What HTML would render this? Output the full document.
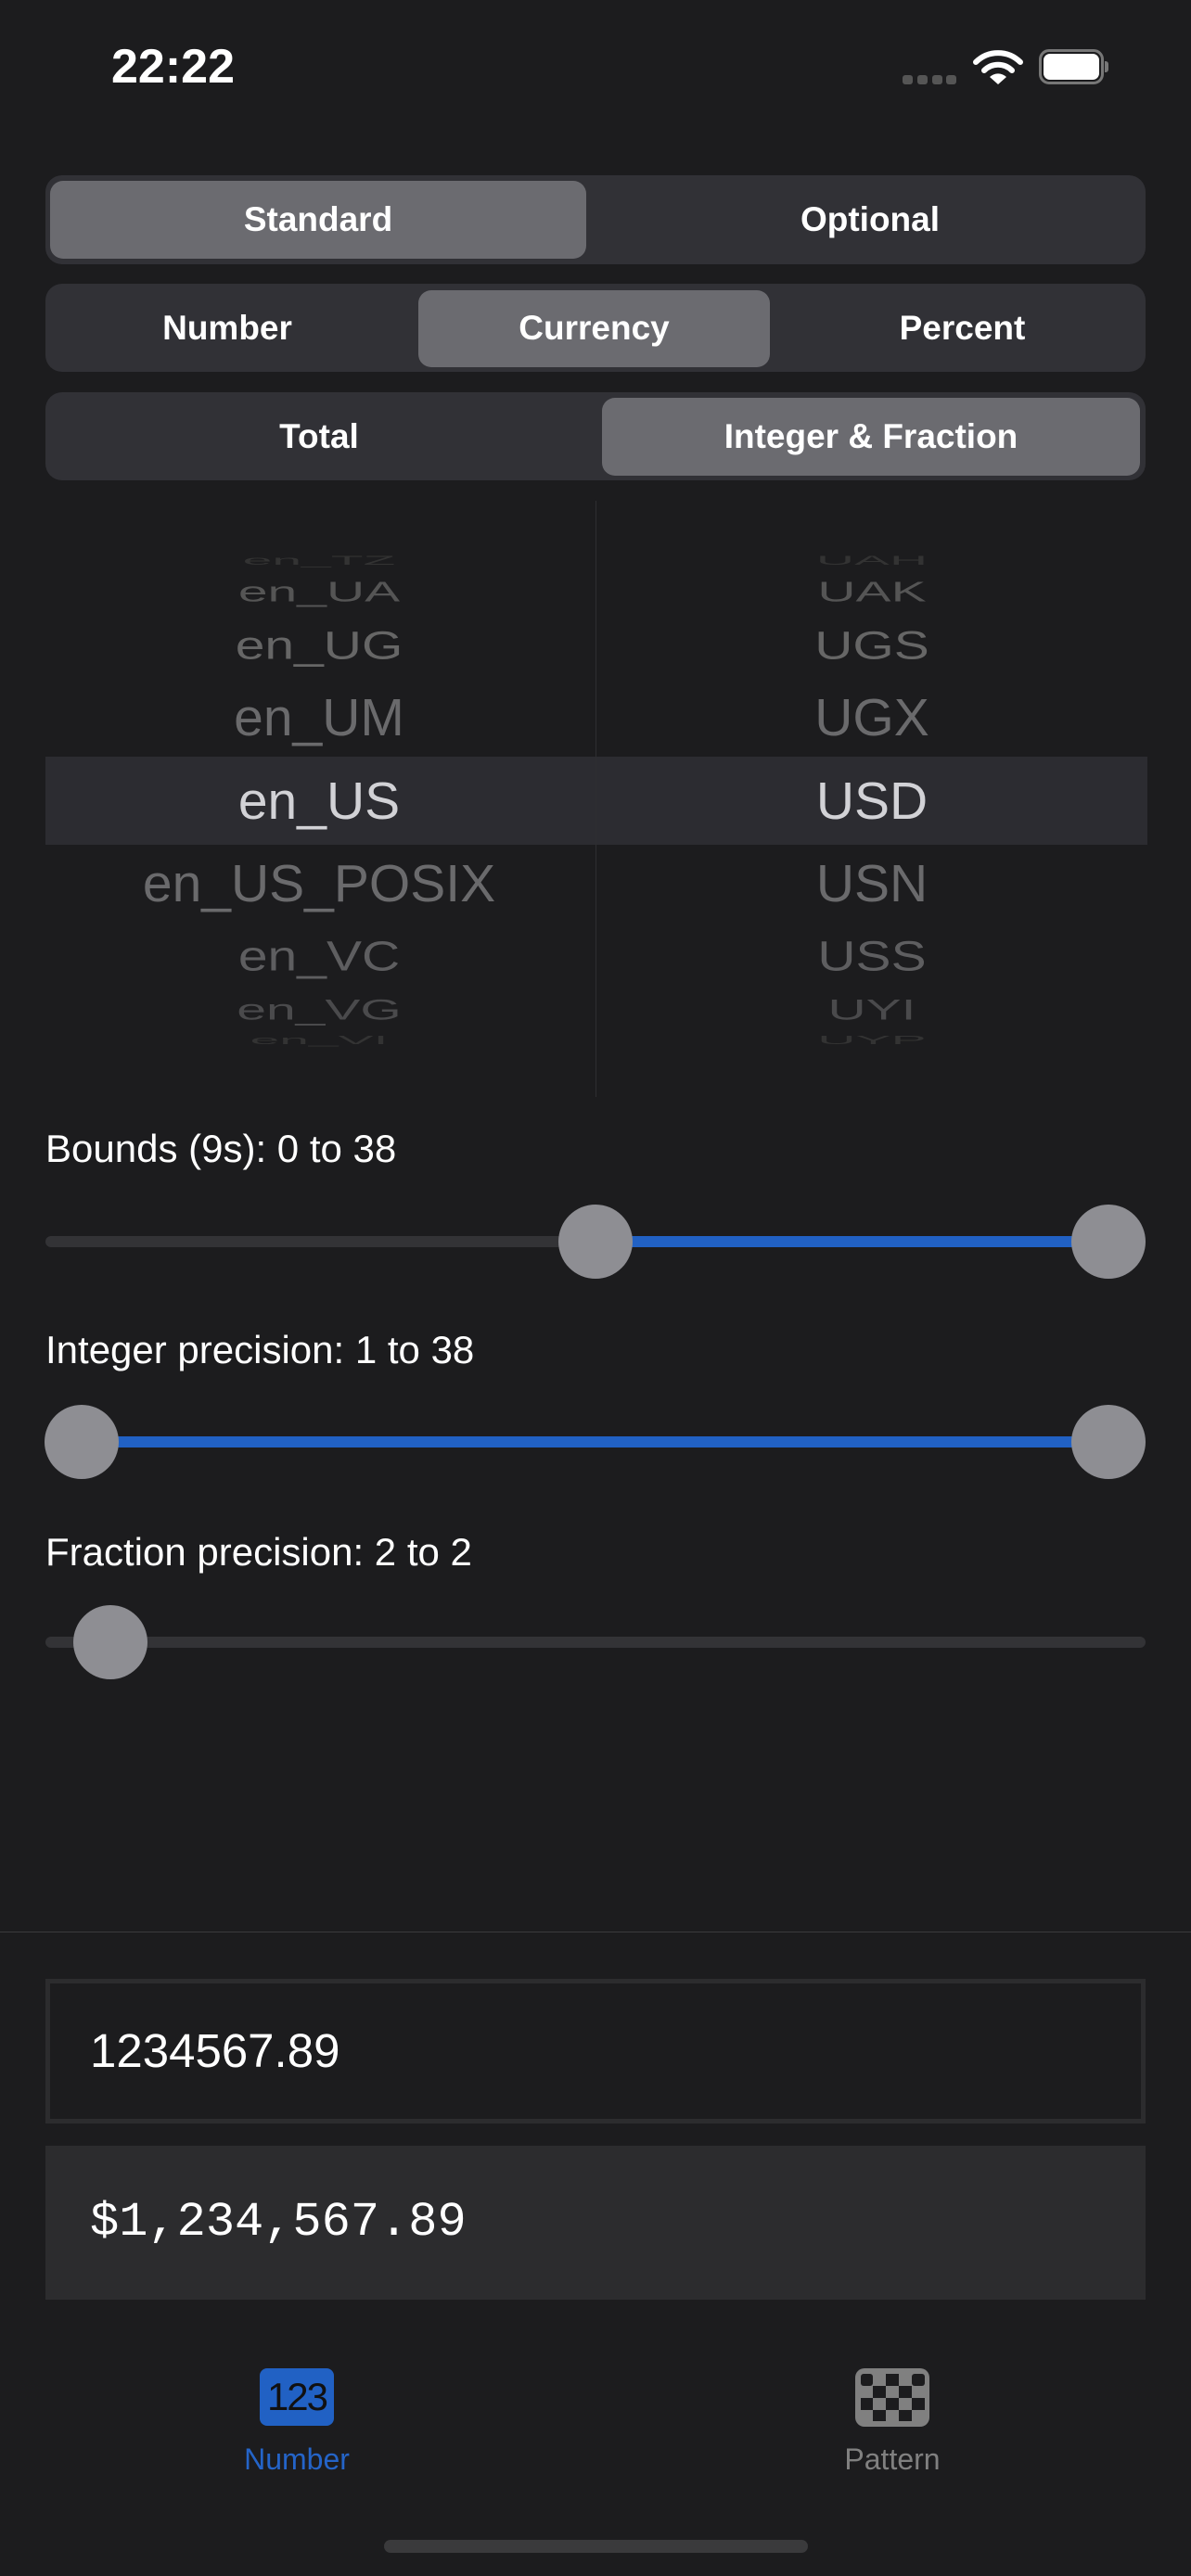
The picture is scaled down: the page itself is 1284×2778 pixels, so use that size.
<!DOCTYPE html>
<html><head><meta charset="utf-8"><style>
*{margin:0;padding:0;box-sizing:border-box}
body{width:1284px;height:2778px;background:#1c1c1e;position:relative;overflow:hidden;font-family:"Liberation Sans",sans-serif;color:#fff}
.a{position:absolute}
.seg{position:absolute;left:49px;width:1186px;background:#313136;border-radius:18px}
.sel{position:absolute;background:#6b6b70;border-radius:14px}
.st{position:absolute;font-size:37px;font-weight:bold;text-align:center;transform:translateY(-50%)}
.pk{position:absolute;width:600px;text-align:center;font-size:57px;line-height:1;white-space:nowrap}
.lbl{position:absolute;left:49px;font-size:42px;color:#fff}
.trk{position:absolute;left:49px;width:1186px;height:12px;background:#333336;border-radius:6px}
.blue{position:absolute;height:12px;background:#2161c4}
.th{position:absolute;width:80px;height:80px;border-radius:50%;background:#8e8e93}
</style></head><body>
<div class="a" style="left:120px;top:43px;font-size:52px;font-weight:bold;line-height:58px">22:22</div>
<div class="a" style="left:973px;top:81px;width:11px;height:10px;border-radius:3px;background:#555"></div>
<div class="a" style="left:989px;top:81px;width:11px;height:10px;border-radius:3px;background:#555"></div>
<div class="a" style="left:1005px;top:81px;width:11px;height:10px;border-radius:3px;background:#555"></div>
<div class="a" style="left:1020px;top:81px;width:11px;height:10px;border-radius:3px;background:#555"></div>
<svg class="a" style="left:1048px;top:54px" width="56" height="38" viewBox="0 0 56 38"><path d="M4 13 A34 34 0 0 1 52 13" stroke="#fff" stroke-width="6" fill="none" stroke-linecap="round"/><path d="M13 22 A21 21 0 0 1 43 22" stroke="#fff" stroke-width="6" fill="none" stroke-linecap="round"/><path d="M28 37 L19 29 A13 13 0 0 1 37 29 Z" fill="#fff"/></svg>
<div class="a" style="left:1120px;top:53px;width:70px;height:38px;border:3px solid #777;border-radius:11px"></div>
<div class="a" style="left:1125px;top:58px;width:60px;height:28px;background:#fff;border-radius:7px"></div>
<div class="a" style="left:1191px;top:66px;width:4px;height:12px;background:#777;border-radius:0 3px 3px 0"></div>

<div class="seg" style="top:189px;height:96px"></div>
<div class="sel" style="left:54px;top:195px;width:578px;height:84px"></div>
<div class="st" style="left:54px;width:578px;top:237px">Standard</div>
<div class="st" style="left:642px;width:592px;top:237px">Optional</div>

<div class="seg" style="top:306px;height:95px"></div>
<div class="sel" style="left:451px;top:313px;width:379px;height:83px"></div>
<div class="st" style="left:49px;width:392px;top:354px">Number</div>
<div class="st" style="left:451px;width:379px;top:354px">Currency</div>
<div class="st" style="left:840px;width:395px;top:354px">Percent</div>

<div class="seg" style="top:423px;height:95px"></div>
<div class="sel" style="left:649px;top:429px;width:580px;height:84px"></div>
<div class="st" style="left:49px;width:590px;top:471px">Total</div>
<div class="st" style="left:649px;width:580px;top:471px">Integer &amp; Fraction</div>

<div class="a" style="left:49px;top:816px;width:1188px;height:95px;background:#2c2c31"></div>
<div class="a" style="left:642px;top:540px;width:1px;height:643px;background:#2e2e31"></div>

<div class="pk" style="left:44px;top:576px;color:#333;transform:scaleY(.24)">en_TZ</div>
<div class="pk" style="left:44px;top:610px;color:#555;transform:scaleY(.53)">en_UA</div>
<div class="pk" style="left:44px;top:668px;color:#666;transform:scaleY(.75)">en_UG</div>
<div class="pk" style="left:44px;top:746px;color:#6a6a6c">en_UM</div>
<div class="pk" style="left:44px;top:836px;color:#d2d2d6">en_US</div>
<div class="pk" style="left:44px;top:925px;color:#6a6a6c">en_US_POSIX</div>
<div class="pk" style="left:44px;top:1003px;color:#5e5e60;transform:scaleY(.8)">en_VC</div>
<div class="pk" style="left:44px;top:1061px;color:#4a4a4c;transform:scaleY(.55)">en_VG</div>
<div class="pk" style="left:44px;top:1093px;color:#333;transform:scaleY(.23)">en_VI</div>

<div class="pk" style="left:640px;top:576px;color:#333;transform:scaleY(.24)">UAH</div>
<div class="pk" style="left:640px;top:610px;color:#555;transform:scaleY(.53)">UAK</div>
<div class="pk" style="left:640px;top:668px;color:#666;transform:scaleY(.75)">UGS</div>
<div class="pk" style="left:640px;top:746px;color:#6a6a6c">UGX</div>
<div class="pk" style="left:640px;top:836px;color:#d2d2d6">USD</div>
<div class="pk" style="left:640px;top:925px;color:#6a6a6c">USN</div>
<div class="pk" style="left:640px;top:1003px;color:#5e5e60;transform:scaleY(.8)">USS</div>
<div class="pk" style="left:640px;top:1061px;color:#4a4a4c;transform:scaleY(.55)">UYI</div>
<div class="pk" style="left:640px;top:1093px;color:#333;transform:scaleY(.23)">UYP</div>

<div class="lbl" style="top:1215px">Bounds (9s): 0 to 38</div>
<div class="trk" style="top:1333px"></div>
<div class="blue" style="left:642px;width:555px;top:1333px"></div>
<div class="th" style="left:602px;top:1299px"></div>
<div class="th" style="left:1155px;top:1299px"></div>

<div class="lbl" style="top:1432px">Integer precision: 1 to 38</div>
<div class="trk" style="top:1549px"></div>
<div class="blue" style="left:88px;width:1108px;top:1549px"></div>
<div class="th" style="left:48px;top:1515px"></div>
<div class="th" style="left:1155px;top:1515px"></div>

<div class="lbl" style="top:1650px">Fraction precision: 2 to 2</div>
<div class="trk" style="top:1765px"></div>
<div class="th" style="left:79px;top:1731px"></div>

<div class="a" style="left:0;top:2083px;width:1284px;height:1px;background:#3a3a3c"></div>
<div class="a" style="left:49px;top:2134px;width:1186px;height:156px;border:5px solid #2c2c2e"></div>
<div class="a" style="left:97px;top:2182px;font-size:51px;line-height:60px">1234567.89</div>
<div class="a" style="left:49px;top:2314px;width:1186px;height:166px;background:#2c2c2e"></div>
<div class="a" style="left:97px;top:2366px;font-family:'Liberation Mono',monospace;font-size:52px;line-height:62px">$1,234,567.89</div>

<div class="a" style="left:280px;top:2554px;width:80px;height:62px;background:#2161c4;border-radius:8px;color:#111;font-size:42px;text-align:center;line-height:62px;letter-spacing:-2px">123</div>
<div class="a" style="left:220px;top:2634px;width:200px;text-align:center;font-size:32px;color:#2464c8">Number</div>
<svg class="a" style="left:922px;top:2554px" width="80" height="63" viewBox="0 0 80 63"><rect width="80" height="63" rx="10" fill="#808080"/><g fill="#1c1c1e"><rect x="6" y="6" width="13" height="13" rx="3"/><rect x="33" y="6" width="14" height="13"/><rect x="61" y="6" width="14" height="13" rx="3"/><rect x="19" y="19" width="14" height="13"/><rect x="47" y="19" width="14" height="13"/><rect x="6" y="32" width="13" height="13"/><rect x="33" y="32" width="14" height="13"/><rect x="61" y="32" width="14" height="13"/><rect x="19" y="45" width="14" height="12"/><rect x="47" y="45" width="14" height="12"/></g></svg>
<div class="a" style="left:862px;top:2634px;width:200px;text-align:center;font-size:32px;color:#808080">Pattern</div>
<div class="a" style="left:414px;top:2739px;width:457px;height:14px;border-radius:7px;background:#3a3a3c"></div>
</body></html>
